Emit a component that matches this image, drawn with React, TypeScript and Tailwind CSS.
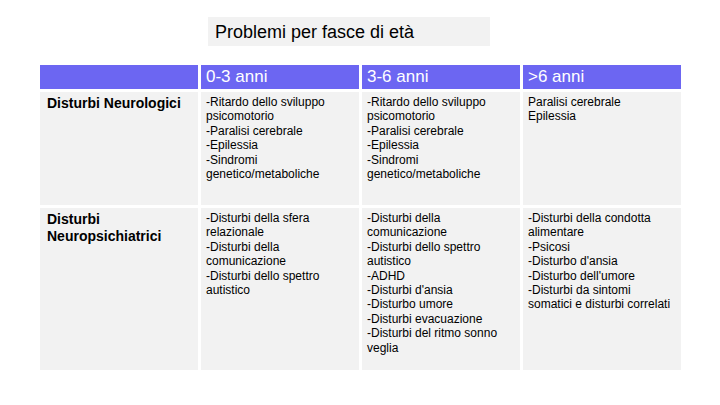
import React from 'react'

const headers = ['', '0-3 anni', '3-6 anni', '>6 anni']

const rows = [
    {
        label: 'Disturbi Neurologici',
        height: 'h-[113px]',
        cells: [
            ['-Ritardo dello sviluppo psicomotorio', '-Paralisi cerebrale', '-Epilessia', '-Sindromi genetico/metaboliche'],
            ['-Ritardo dello sviluppo psicomotorio', '-Paralisi cerebrale', '-Epilessia', '-Sindromi genetico/metaboliche'],
            ['Paralisi cerebrale', 'Epilessia'],
        ],
    },
    {
        label: 'Disturbi Neuropsichiatrici',
        height: 'h-[162px]',
        cells: [
            ['-Disturbi della sfera relazionale', '-Disturbi della comunicazione', '-Disturbi dello spettro autistico'],
            [
                '-Disturbi della comunicazione',
                '-Disturbi dello spettro autistico',
                '-ADHD',
                "-Disturbi d'ansia",
                '-Disturbo umore',
                '-Disturbi evacuazione',
                '-Disturbi del ritmo sonno veglia',
            ],
            [
                '-Disturbi della condotta alimentare',
                '-Psicosi',
                "-Disturbo d'ansia",
                "-Disturbo dell'umore",
                '-Disturbi da sintomi somatici e disturbi correlati',
            ],
        ],
    },
]

export default function App() {
    return (
        <div className="w-[720px] h-[405px] bg-white font-['Liberation_Sans',Arial,sans-serif] text-black">
            <div className="pt-[17px] pl-[208px]">
                <div className="w-[282px] h-[29px] bg-[#f2f2f2] flex items-center pl-[7px] pt-[1px] text-[18px]">
                    Problemi per fasce di età
                </div>
            </div>

            <div className="ml-[40px] mt-[19px] grid grid-cols-[158px_158px_158px_158px] gap-x-[3px] gap-y-[3px]">
                {headers.map((h, i) => (
                    <div key={i} className="h-[24px] bg-[#6c66f2] text-white text-[17px] flex items-center px-[5px]">
                        {h}
                    </div>
                ))}
                {rows.map((row) => (
                    <React.Fragment key={row.label}>
                        <div className={`${row.height} bg-[#f2f2f2] px-[7px] pt-[3px] text-[14px] leading-[17px] font-bold`}>
                            {row.label}
                        </div>
                        {row.cells.map((lines, j) => (
                            <div key={j} className={`${row.height} bg-[#f2f2f2] px-[5px] pt-[3px] text-[12px] leading-[14.4px]`}>
                                {lines.map((l, k) => (
                                    <div key={k}>{l}</div>
                                ))}
                            </div>
                        ))}
                    </React.Fragment>
                ))}
            </div>
        </div>
    )
}
